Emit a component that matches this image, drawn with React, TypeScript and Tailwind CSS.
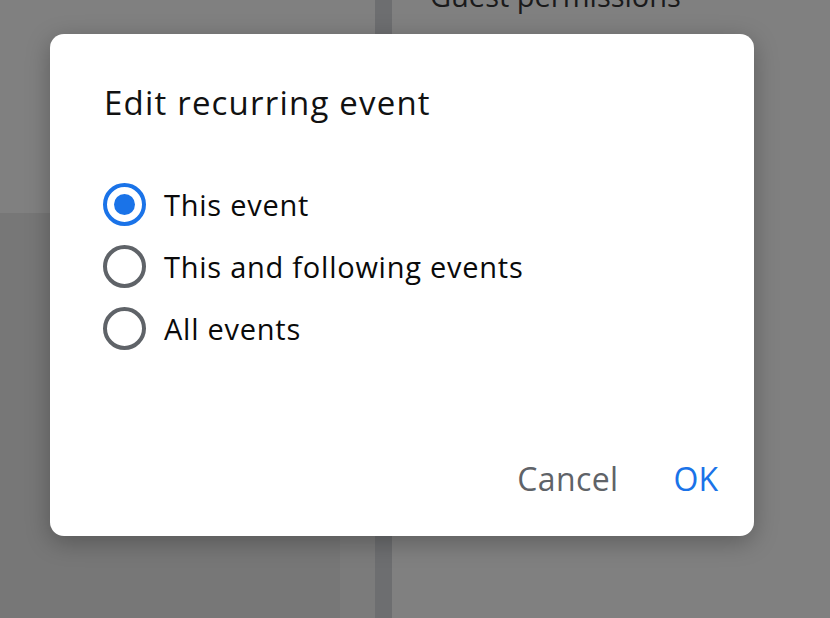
import React, { useState } from 'react';

const options = ['This event', 'This and following events', 'All events'];

const Radio: React.FC<{ checked: boolean }> = ({ checked }) => (
  <span
    className={`flex h-[43px] w-[43px] shrink-0 items-center justify-center rounded-full border-[4px] ${
      checked ? 'border-[#1a73e8]' : 'border-[#5f6368]'
    }`}
  >
    {checked && <span className="h-[21px] w-[21px] rounded-full bg-[#1a73e8]" />}
  </span>
);

const App: React.FC = () => {
  const [selected, setSelected] = useState(0);

  return (
    <div className="relative flex h-[618px] w-[830px] overflow-hidden bg-[#808080] font-['Open_Sans',sans-serif]">
      {/* page behind the scrim */}
      <div className="flex w-[375px] flex-col">
        <div className="h-[213px] bg-[#808080]" />
        <div className="flex flex-1">
          <div className="w-[340px] bg-[#777777]" />
          <div className="flex-1 bg-[#7b7b7b]" />
        </div>
      </div>
      <div className="w-[17px] bg-[#6d6e70]" />
      <div className="flex-1 bg-[#808080] pl-[38px]">
        <p className="mt-[-22px] text-[29px] leading-[36px] font-medium text-[#1a1a1b]">Guest permissions</p>
      </div>

      {/* dialog */}
      <div className="absolute left-[50px] top-[34px] flex h-[502px] w-[704px] flex-col rounded-[14px] bg-white shadow-[0_6px_24px_rgba(0,0,0,0.28)]">
        <h2 className="pl-[54px] pt-[48px] text-[33px] font-medium leading-[42px] tracking-[1.2px] text-[#111111]">
          Edit recurring event
        </h2>
        <div className="mt-[49px] flex flex-col pl-[53px]">
          {options.map((label, i) => (
            <label
              key={label}
              className="flex h-[62px] cursor-pointer items-center gap-[18px]"
              onClick={() => setSelected(i)}
            >
              <Radio checked={selected === i} />
              <span className="text-[29px] leading-none tracking-[0.75px] text-[#0a0a0a]">{label}</span>
            </label>
          ))}
        </div>
        <div className="mt-auto flex items-center justify-end gap-[55px] pb-[41px] pr-[36px]">
          <button className="text-[32px] font-medium leading-none tracking-[0.4px] text-[#5f6368]">Cancel</button>
          <button className="text-[32px] font-medium leading-none text-[#1a73e8]">OK</button>
        </div>
      </div>
    </div>
  );
};

export default App;
